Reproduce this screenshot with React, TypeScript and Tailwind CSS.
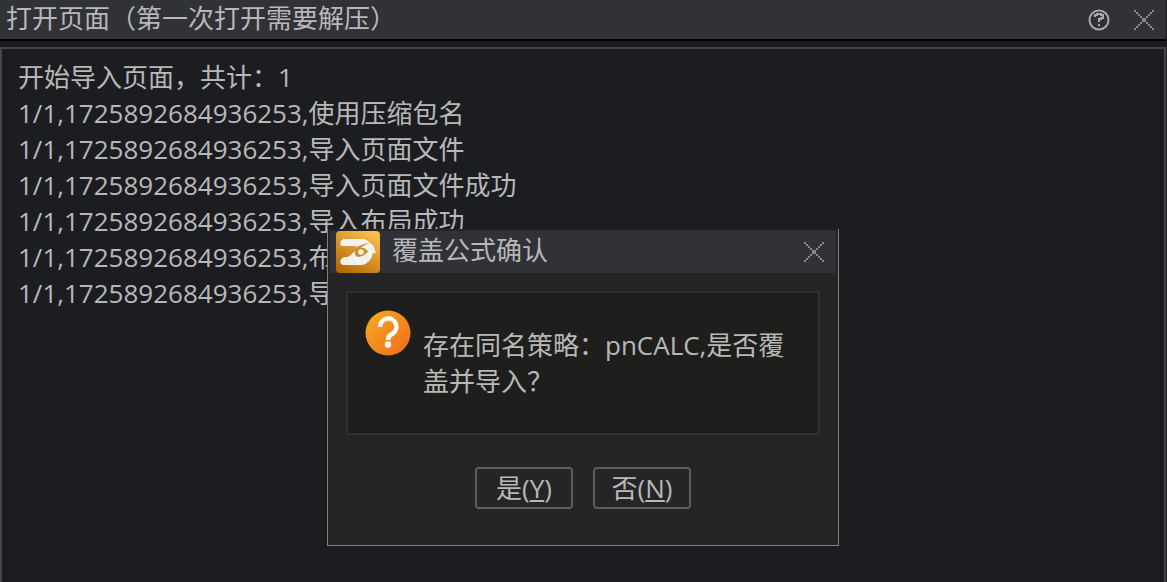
import { useState } from 'react';

const importLog = [
  '开始导入页面，共计：1',
  '1/1,1725892684936253,使用压缩包名',
  '1/1,1725892684936253,导入页面文件',
  '1/1,1725892684936253,导入页面文件成功',
  '1/1,1725892684936253,导入布局成功',
  '1/1,1725892684936253,布局导入成功',
  '1/1,1725892684936253,导入公式',
];

const steps = [0, 1, 2, 3, 4, 5, 6, 7, 8, 9];

function CloseIcon() {
  return (
    <svg viewBox="0 0 10 10" className="size-5" shapeRendering="crispEdges" aria-hidden="true">
      {steps.map((n) => (
        <g key={n} fill="#87888b">
          <rect x={n} y={n} width="1" height="1" />
          <rect x={9 - n} y={n} width="1" height="1" />
        </g>
      ))}
    </svg>
  );
}

function HelpIcon() {
  return (
    <svg viewBox="0 0 22 22" className="size-[22px]" fill="none" stroke="#a9a9ab" strokeWidth="2" aria-hidden="true">
      <circle cx="11" cy="11" r="9.5" />
      <path d="M7 8V6h2V5h4v1h2v3h-2v1h-2v3M10 16h2" />
    </svg>
  );
}

function AppLogo() {
  return (
    <svg viewBox="0 0 44 42" className="h-[42px] w-11 shrink-0" aria-hidden="true">
      <defs>
        <linearGradient id="logo-bg" x1="0.8" y1="0" x2="0.2" y2="1">
          <stop offset="0" stopColor="#fdbf4c" />
          <stop offset="0.5" stopColor="#d8942a" />
          <stop offset="1" stopColor="#b06c02" />
        </linearGradient>
      </defs>
      <rect width="44" height="42" rx="4" fill="url(#logo-bg)" />
      <path
        d="M8 8H28Q32 9 34 12L37 14L40 22H37Q35 32 26 34H7Q3 33 5 28L8 26H12L21 15H7Q3 15 5 10Q6 8 8 8Z"
        fill="#f4f2ee"
      />
      <path d="M12 24Q20 14 34 11.500Q28 14 25 16.500Q30 17 32 20.500Q28 26 22 26Q18 25 19 20Q16 22 14 25Z" fill="#cf8c28" />
      <circle cx="25" cy="21" r="2.800" fill="#f4f2ee" />
    </svg>
  );
}

function QuestionIcon() {
  return (
    <svg viewBox="0 0 46 46" className="size-[46px] shrink-0" aria-hidden="true">
      <defs>
        <linearGradient id="question-bg" x1="0" y1="0" x2="1" y2="1">
          <stop offset="0" stopColor="#f8ac20" />
          <stop offset="1" stopColor="#ee6a1c" />
        </linearGradient>
      </defs>
      <circle cx="23" cy="23" r="22.5" fill="url(#question-bg)" />
      <path d="M15 17a8.2 8.2 0 1 1 12 7q-4 2-4 6" fill="none" stroke="#fff" strokeWidth="4.5" />
      <circle cx="23" cy="34.5" r="3.2" fill="#fff" />
    </svg>
  );
}

interface ConfirmDialogProps {
  onClose: () => void;
}

function ConfirmDialog({ onClose }: ConfirmDialogProps) {
  return (
    <div
      role="dialog"
      aria-labelledby="confirm-title"
      className="w-full max-w-[512px] border-x border-b border-[#808080] bg-[#252525] px-0.5 pt-0.5 pb-9"
    >
      <div className="flex h-[42px] items-center bg-[#313238] pr-3 pl-1.5">
        <AppLogo />
        <h2 id="confirm-title" className="ml-3 flex-1 pb-1">覆盖公式确认</h2>
        <button type="button" aria-label="关闭" onClick={onClose}>
          <CloseIcon />
        </button>
      </div>

      <div className="mx-4 mt-[18px] flex min-h-36 gap-3 border-2 border-[#303030] bg-[#1e1f1d] px-[17px] py-[17px]">
        <QuestionIcon />
        <p className="pt-[17px]">存在同名策略：pnCALC,是否覆盖并导入？</p>
      </div>

      <div className="mt-8 flex justify-center gap-5">
        <button
          type="button"
          onClick={onClose}
          className="h-[42px] w-[98px] rounded border-2 border-[#5d5d5d]"
        >
          是(<span className="underline">Y</span>)
        </button>
        <button
          type="button"
          onClick={onClose}
          className="h-[42px] w-[98px] rounded border-2 border-[#5d5d5d]"
        >
          否(<span className="underline">N</span>)
        </button>
      </div>
    </div>
  );
}

export default function App() {
  const [confirming, setConfirming] = useState(true);

  return (
    <div className="relative flex min-h-screen flex-col bg-[#1c1d21] pr-px font-['Open_Sans','Noto_Sans_CJK_SC',sans-serif] text-[26px]/9 font-normal text-[#b8b8b8]">
      <header className="flex h-[41px] items-center border-b-2 border-black bg-[#313238] pr-3 pl-1.5">
        <h1 className="flex-1 pb-1">打开页面（第一次打开需要解压）</h1>
        <div className="flex items-center gap-6">
          <button type="button" aria-label="帮助">
            <HelpIcon />
          </button>
          <button type="button" aria-label="关闭">
            <CloseIcon />
          </button>
        </div>
      </header>

      <main className="mt-1.5 flex-1 border-x-2 border-t-2 border-[#454548] px-4 py-2.5">
        {importLog.map((line) => (
          <p key={line}>{line}</p>
        ))}
      </main>

      {confirming && (
        <div className="absolute inset-x-0 top-[229px] flex justify-center pr-px">
          <ConfirmDialog onClose={() => setConfirming(false)} />
        </div>
      )}
    </div>
  );
}
